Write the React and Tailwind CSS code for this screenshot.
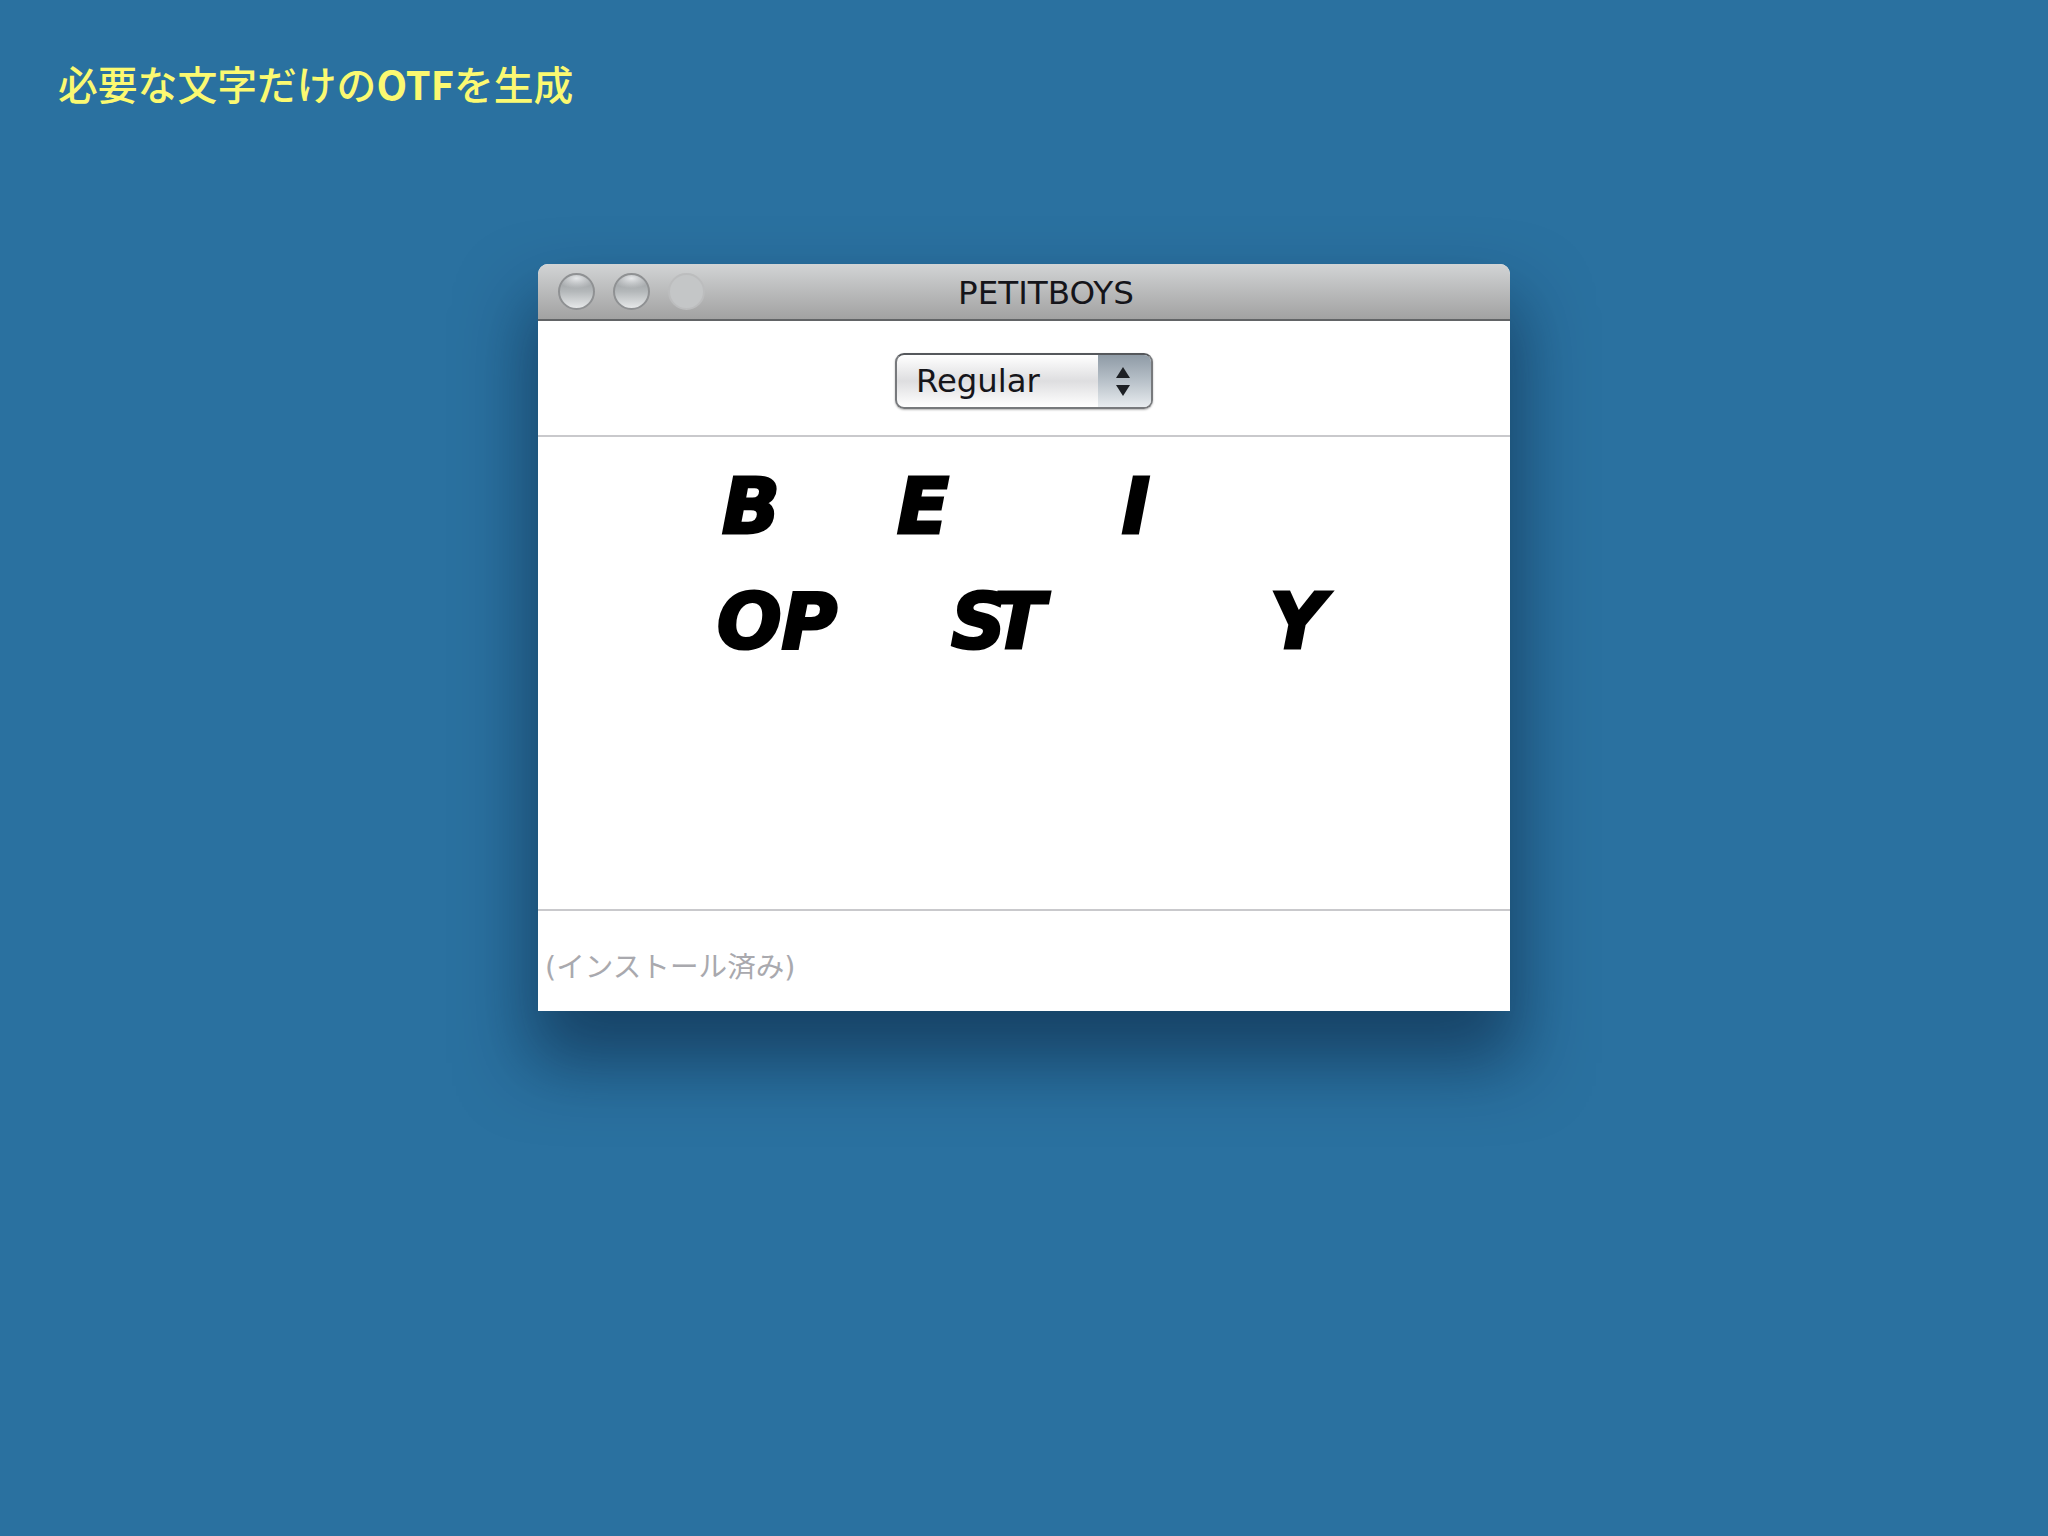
const uiFont = { fontFamily: '"DejaVu Sans", "Noto Sans CJK JP", sans-serif' };

const TrafficLight = ({ faded }) => (
    <span
        className={`size-[37px] rounded-full border-2 ${faded ? 'border-[#bcbdbe] bg-[#c4c6c7]' : 'border-[#8f9193] bg-[radial-gradient(ellipse_60%_30%_at_50%_10%,#e6e8ea_0%,transparent_100%),linear-gradient(to_bottom,#96999c_0%,#b4b8ba_50%,#e6e8e9_100%)]'}`}
    />
);

const App = () => {
    return (
        <div className="w-[2048px] h-[1536px] overflow-hidden bg-[#2a71a0] pt-[55px]" style={uiFont}>
            <h1
                className="ml-[58px] h-[56px] text-[39.8px] leading-[56px] font-medium text-[#fbf971]"
                style={{ fontFamily: '"Noto Sans CJK JP", sans-serif' }}
            >
                必要な文字だけの<span className="font-bold">OTF</span>を生成
            </h1>

            <div className="ml-[538px] mt-[153px] w-[972px] h-[747px] flex flex-col bg-white rounded-t-[10px] shadow-[0_44px_70px_8px_rgba(5,25,50,0.52)]">
                <div className="h-[57px] flex items-center relative rounded-t-[10px] border-b-2 border-[#626466] bg-gradient-to-b from-[#d2d4d5] to-[#a2a2a2]">
                    <div className="flex gap-[18px] pl-[20px]">
                        <TrafficLight />
                        <TrafficLight />
                        <TrafficLight faded />
                    </div>
                    <span className="ml-[253px] pt-[3px] text-[32.6px] leading-[57px] text-[#15151a]">PETITBOYS</span>
                </div>

                <div className="h-[116px] flex justify-center items-start pt-[32px] border-b-2 border-[#c9c9cc]">
                    <div className="w-[258px] h-[56px] flex rounded-[9px] border-2 border-[#77797c] border-t-[#55585c] overflow-hidden bg-gradient-to-b from-white via-[#dedee0] to-white shadow-[0_1px_2px_rgba(0,0,0,0.3)]">
                        <span className="w-[201px] pl-[19px] text-[32.3px] leading-[53px] text-[#15151a]">Regular</span>
                        <span className="flex-1 flex flex-col items-center justify-center gap-[7px] pr-[3px] bg-gradient-to-b from-[#8f9ba6] via-[#b8c1c9] to-[#e8ecef]">
                            <svg width="14" height="11" viewBox="0 0 14 11"><path d="M7 0L14 11H0Z" fill="#1d2024" /></svg>
                            <svg width="14" height="11" viewBox="0 0 14 11"><path d="M0 0H14L7 11Z" fill="#1d2024" /></svg>
                        </span>
                    </div>
                </div>

                <div className="h-[474px] pt-[12px] border-b-2 border-[#c9c9cc] text-black italic font-bold text-[76px] leading-[115px] [-webkit-text-stroke:3px_black]">
                    <div className="flex h-[115px]">
                        <span className="ml-[184px]">B</span>
                        <span className="ml-[117px]">E</span>
                        <span className="ml-[173px]">I</span>
                    </div>
                    <div className="flex h-[115px]">
                        <span className="ml-[179px]">OP</span>
                        <span className="ml-[114px] tracking-[-13px]">ST</span>
                        <span className="ml-[238px]">Y</span>
                    </div>
                </div>

                <div className="flex-1 pl-[7px] pt-[36px] text-[28.6px] leading-[40px] text-[#a9a9ae]">(インストール済み)</div>
            </div>
        </div>
    );
};

export default App;
